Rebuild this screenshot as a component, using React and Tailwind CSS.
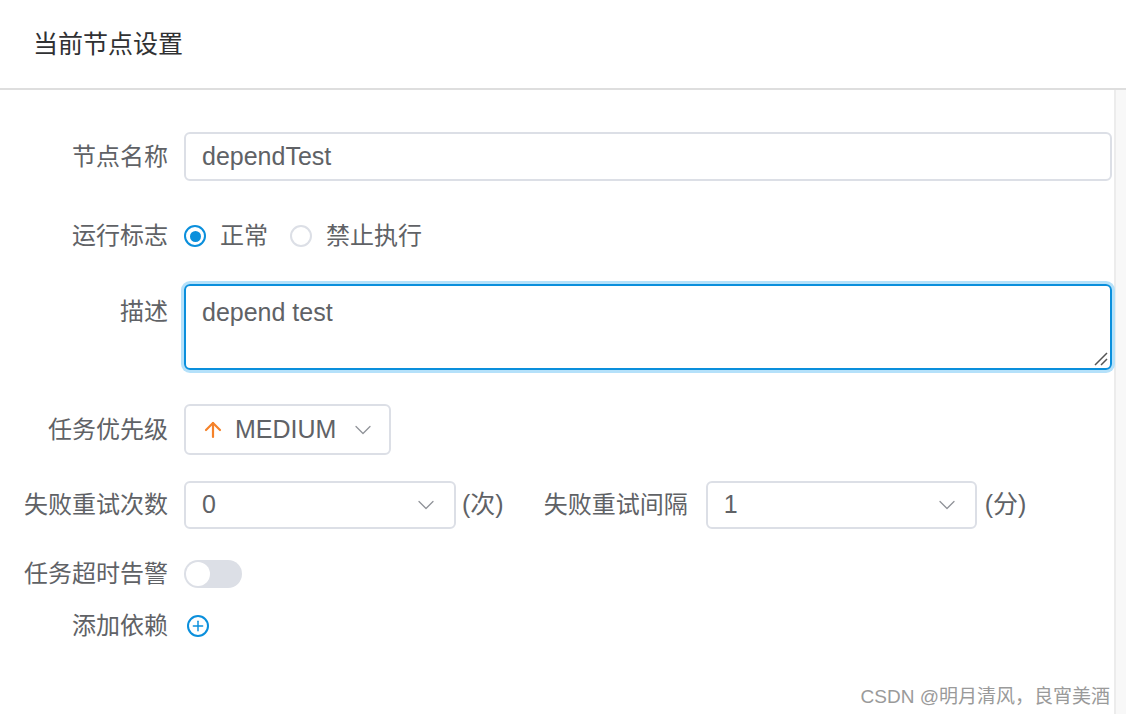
import { ChevronDown, ArrowUp, Plus } from 'lucide-react';

const font = { fontFamily: '"Liberation Sans", "Noto Sans CJK SC", sans-serif' };

const Label = ({ children, top }) => (
  <div
    className={`w-[168px] shrink-0 text-right text-[24px] text-[#606266] leading-none ${top ? 'pt-[16px] self-start' : ''}`}
  >
    {children}
  </div>
);

const Select = ({ width, children, pr = 14 }) => (
  <div
    className="shrink-0 flex items-center justify-between h-full border-2 border-[#dcdfe6] rounded-[6px] pl-[16px] bg-white"
    style={{ width, paddingRight: pr }}
  >
    <div className="flex items-center text-[25px] text-[#606266]">{children}</div>
    <ChevronDown className="w-[28px] h-[28px] text-[#909399]" strokeWidth={1.1} />
  </div>
);

const Radio = ({ checked, label }) => (
  <div className="flex items-center gap-[14px]">
    {checked ? (
      <span className="w-[22px] h-[22px] rounded-full border-2 border-[#0a8fdc] flex items-center justify-center">
        <span className="w-[11px] h-[11px] rounded-full bg-[#0a8fdc]" />
      </span>
    ) : (
      <span className="w-[22px] h-[22px] rounded-full border-2 border-[#dcdfe6]" />
    )}
    <span className="text-[24px] text-[#606266] leading-none">{label}</span>
  </div>
);

export default function App() {
  return (
    <div className="relative w-[1126px] h-[714px] bg-white overflow-hidden" style={font}>
      <div className="h-[90px] flex items-center pl-[33px] border-b-2 border-[#dedede]">
        <h1 className="text-[25px] text-[#303133] leading-none">当前节点设置</h1>
      </div>

      <div className="flex h-[624px]">
        <div className="flex-1 flex flex-col pr-[2px]">
          <div className="flex items-center gap-[16px] mt-[42px] h-[49px]">
            <Label>节点名称</Label>
            <div className="flex-1 h-full border-2 border-[#dcdfe6] rounded-[6px] flex items-center pl-[16px] text-[25px] text-[#606266]">
              dependTest
            </div>
          </div>

          <div className="flex items-center gap-[16px] mt-[31px] h-[48px]">
            <Label>运行标志</Label>
            <div className="flex items-center gap-[22px]">
              <Radio checked label="正常" />
              <Radio label="禁止执行" />
            </div>
          </div>

          <div className="flex gap-[16px] mt-[24px] h-[86px]">
            <Label top>描述</Label>
            <div className="relative flex-1 h-full border-2 border-[#0a8fdc] rounded-[6px] ring-[3px] ring-[#b5e1fa] pl-[16px] pt-[14px] text-[25px] text-[#606266] leading-none">
              depend test
              <svg className="absolute right-[2px] bottom-[2px]" width="16" height="16" viewBox="0 0 16 16">
                <path d="M3 15 L15 3 M9 15 L15 9" stroke="#555" strokeWidth="1.5" />
              </svg>
            </div>
          </div>

          <div className="flex items-center gap-[16px] mt-[34px] h-[51px]">
            <Label>任务优先级</Label>
            <Select width={207} pr={12}>
              <ArrowUp className="w-[24px] h-[24px] text-[#f5822a] mr-[10px] -ml-[1px]" strokeWidth={2.2} />
              MEDIUM
            </Select>
          </div>

          <div className="flex items-center mt-[26px] h-[48px]">
            <Label>失败重试次数</Label>
            <div className="ml-[16px] h-full flex items-center">
              <Select width={272}>0</Select>
            </div>
            <span className="ml-[6px] text-[25px] text-[#606266]">(次)</span>
            <span className="ml-[40px] text-[24px] text-[#606266] leading-none">失败重试间隔</span>
            <div className="ml-[18px] h-full flex items-center">
              <Select width={271}>1</Select>
            </div>
            <span className="ml-[8px] text-[25px] text-[#606266]">(分)</span>
          </div>

          <div className="flex items-center gap-[16px] mt-[27px] h-[36px]">
            <Label>任务超时告警</Label>
            <div className="w-[58px] h-[28px] rounded-full bg-[#dcdfe6] flex items-center pl-[2px]">
              <span className="w-[24px] h-[24px] rounded-full bg-white" />
            </div>
          </div>

          <div className="flex items-center gap-[16px] mt-[16px] h-[36px]">
            <Label>添加依赖</Label>
            <span className="ml-[3px] w-[22px] h-[22px] rounded-full border-2 border-[#0a8fdc] flex items-center justify-center">
              <Plus className="w-[16px] h-[16px] text-[#0a8fdc]" strokeWidth={2.2} />
            </span>
          </div>
        </div>
        <div className="w-[12px] border-l-2 border-[#ececec] bg-[#f8f8f8]" />
      </div>

      <div className="absolute right-[16px] bottom-[8px] text-[19px] text-[#9a9a9a] leading-none">
        CSDN @明月清风，良宵美酒
      </div>
    </div>
  );
}
